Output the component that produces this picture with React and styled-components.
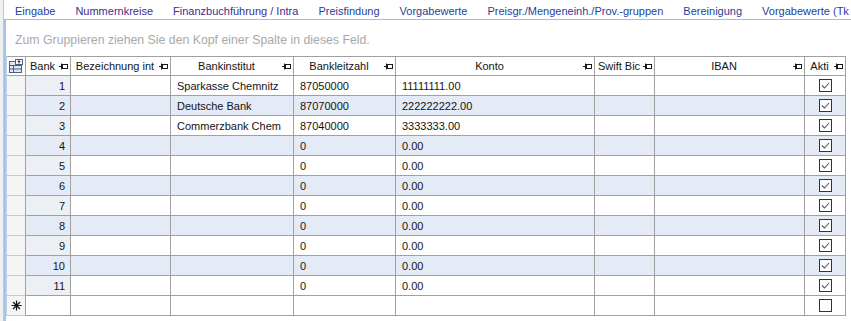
import React from 'react';
import styled, { createGlobalStyle } from 'styled-components';

const GlobalStyle = createGlobalStyle`
  html, body {
    margin: 0;
    padding: 0;
    background: #ffffff;
    overflow: hidden;
  }
  body {
    font-family: "Liberation Sans", Arial, sans-serif;
    font-size: 11px;
  }
`;

const COLS = '19px 45px 100px 123px 102px 199px 60px 150px 41px';

const Page = styled.div`
  display: flex;
  width: 851px;
  height: 321px;
  background: #ffffff;
`;

const LeftStrip = styled.div`
  width: 3px;
  background: #f0f0f0;
  border-right: 1px solid #c4c8ce;
`;

const Main = styled.div`
  flex: 1;
  display: flex;
  flex-direction: column;
  min-width: 0;
`;

const TabBar = styled.div`
  height: 20px;
  display: flex;
  align-items: center;
  padding: 2px 0 0 1px;
  box-sizing: border-box;
  border-bottom: 1px solid #a2bde3;
  white-space: nowrap;
  overflow: hidden;
`;

const Tab = styled.span`
  padding: 0 10px;
  color: ${(p) => (p.$visited ? '#3f2c8e' : '#1f3f98')};
  font-size: 11px;
  flex-shrink: 0;
`;

const Body = styled.div`
  flex: 1;
  display: flex;
  flex-direction: column;
  border-left: 2px solid #a6c2e8;
`;

const GroupPanel = styled.div`
  height: 36px;
  display: flex;
  align-items: center;
  padding: 3px 0 0 9px;
  box-sizing: border-box;
  color: #a9a9a9;
  font-size: 12.3px;
`;

const Grid = styled.div`
  display: flex;
  flex-direction: column;
  border-left: 1px solid #c3d4ec;
  width: fit-content;
`;

const Row = styled.div`
  display: grid;
  grid-template-columns: ${COLS};
  height: 20px;
  box-sizing: border-box;
  background: ${(p) => (p.$even ? '#e4eaf6' : '#ffffff')};
  border-top: ${(p) => (p.$header ? '1px solid #a0a0a0' : 'none')};
`;

const Indicator = styled.div`
  display: flex;
  align-items: center;
  justify-content: center;
  background: ${(p) => (p.$header ? '#ffffff' : '#f5f5f5')};
  border-right: 1px solid #a0a0a0;
  border-bottom: 1px solid ${(p) => (p.$header ? '#a0a0a0' : '#b8cce6')};
`;

const HeadCell = styled.div`
  display: flex;
  align-items: center;
  border-right: 1px solid #a0a0a0;
  border-bottom: 1px solid #a0a0a0;
  padding-right: 2px;
  color: #141414;
  min-width: 0;
  overflow: hidden;
`;

const HeadText = styled.span`
  flex: 1;
  min-width: 0;
  text-align: center;
  white-space: nowrap;
  overflow: hidden;
`;

const Cell = styled.div`
  display: flex;
  align-items: center;
  justify-content: ${(p) => (p.$align === 'right' ? 'flex-end' : p.$align === 'center' ? 'center' : 'flex-start')};
  padding: ${(p) => (p.$align === 'right' ? '0 5px 0 0' : '0 0 0 6px')};
  border-right: 1px solid #a0a0a0;
  border-bottom: 1px solid #a0a0a0;
  background: ${(p) => p.$bg || 'transparent'};
  color: #141414;
  white-space: nowrap;
  overflow: hidden;
  min-width: 0;
`;

const CheckBox = styled.span`
  width: 13px;
  height: 13px;
  box-sizing: border-box;
  border: 1px solid #333333;
  background: #ffffff;
  display: flex;
  align-items: center;
  justify-content: center;
  margin-left: -6px;
`;

const PinIcon = () => (
  <svg width="9" height="7" viewBox="0 0 9 7" style={{ flexShrink: 0 }}>
    <path d="M0 3.5H2.5M2.5 0.5V6.5" stroke="#1a1a1a" strokeWidth="1" fill="none" />
    <rect x="3.5" y="1.5" width="5" height="4" stroke="#1a1a1a" strokeWidth="1" fill="none" />
  </svg>
);

const CheckMark = () => (
  <svg width="11" height="11" viewBox="0 0 11 11">
    <path d="M2 5.5L4.5 8L9 3" stroke="#5a5a5a" strokeWidth="1.1" fill="none" />
  </svg>
);

const ColumnChooserIcon = () => (
  <svg width="16" height="16" viewBox="0 0 16 16">
    <rect x="1.5" y="3.5" width="12" height="11" fill="#dfe7f3" stroke="#4a5f86" />
    <path d="M1.5 7.5H13.5M1.5 11H13.5M5.5 7.5V14.5" stroke="#4a5f86" fill="none" />
    <rect x="7.5" y="1.5" width="7" height="5" fill="#ffffff" stroke="#4a5f86" />
    <path d="M11 5.5V2.8M9.6 4L11 2.6L12.4 4" stroke="#111111" fill="none" />
  </svg>
);

const NewRowIcon = () => (
  <svg width="11" height="11" viewBox="0 0 11 11">
    <path d="M5.5 0.5V10.5M0.5 5.5H10.5M2 2L9 9M9 2L2 9" stroke="#111111" strokeWidth="1.2" fill="none" />
  </svg>
);

const tabs = [
  { label: 'Eingabe' },
  { label: 'Nummernkreise', visited: true },
  { label: 'Finanzbuchführung / Intra', visited: true },
  { label: 'Preisfindung' },
  { label: 'Vorgabewerte' },
  { label: 'Preisgr./Mengeneinh./Prov.-gruppen' },
  { label: 'Bereinigung' },
  { label: 'Vorgabewerte (Tk' },
];

const columns = [
  { key: 'bank', title: 'Bank', align: 'right' },
  { key: 'bez', title: 'Bezeichnung int' },
  { key: 'inst', title: 'Bankinstitut' },
  { key: 'blz', title: 'Bankleitzahl' },
  { key: 'konto', title: 'Konto' },
  { key: 'swift', title: 'Swift Bic' },
  { key: 'iban', title: 'IBAN' },
  { key: 'akti', title: 'Akti', align: 'center' },
];

const rows = [
  { bank: 1, inst: 'Sparkasse Chemnitz', blz: '87050000', konto: '11111111.00', akti: true },
  { bank: 2, inst: 'Deutsche Bank', blz: '87070000', konto: '222222222.00', akti: true },
  { bank: 3, inst: 'Commerzbank Chem', blz: '87040000', konto: '3333333.00', akti: true },
  ...Array.from({ length: 8 }, (_, i) => ({ bank: i + 4, blz: '0', konto: '0.00', akti: true })),
];

const App = () => {
  return (
    <>
      <GlobalStyle />
      <Page>
        <LeftStrip />
        <Main>
          <TabBar>
            {tabs.map((t) => (
              <Tab key={t.label} $visited={t.visited}>{t.label}</Tab>
            ))}
          </TabBar>
          <Body>
            <GroupPanel>Zum Gruppieren ziehen Sie den Kopf einer Spalte in dieses Feld.</GroupPanel>
            <Grid>
              <Row $header>
                <Indicator $header>
                  <ColumnChooserIcon />
                </Indicator>
                {columns.map((c) => (
                  <HeadCell key={c.key}>
                    <HeadText>{c.title}</HeadText>
                    <PinIcon />
                  </HeadCell>
                ))}
              </Row>
              {rows.map((r, i) => {
                const even = i % 2 === 1;
                return (
                  <Row key={r.bank} $even={even}>
                    <Indicator />
                    {columns.map((c) => (
                      <Cell
                        key={c.key}
                        $align={c.align}
                        $bg={c.key === 'bank' && !even ? '#eceff3' : undefined}
                      >
                        {c.key === 'akti' ? (
                          <CheckBox>{r.akti && <CheckMark />}</CheckBox>
                        ) : (
                          r[c.key]
                        )}
                      </Cell>
                    ))}
                  </Row>
                );
              })}
              <Row>
                <Indicator>
                  <NewRowIcon />
                </Indicator>
                {columns.map((c) => (
                  <Cell key={c.key} $align={c.align}>
                    {c.key === 'akti' && <CheckBox />}
                  </Cell>
                ))}
              </Row>
            </Grid>
          </Body>
        </Main>
      </Page>
    </>
  );
};

export default App;
